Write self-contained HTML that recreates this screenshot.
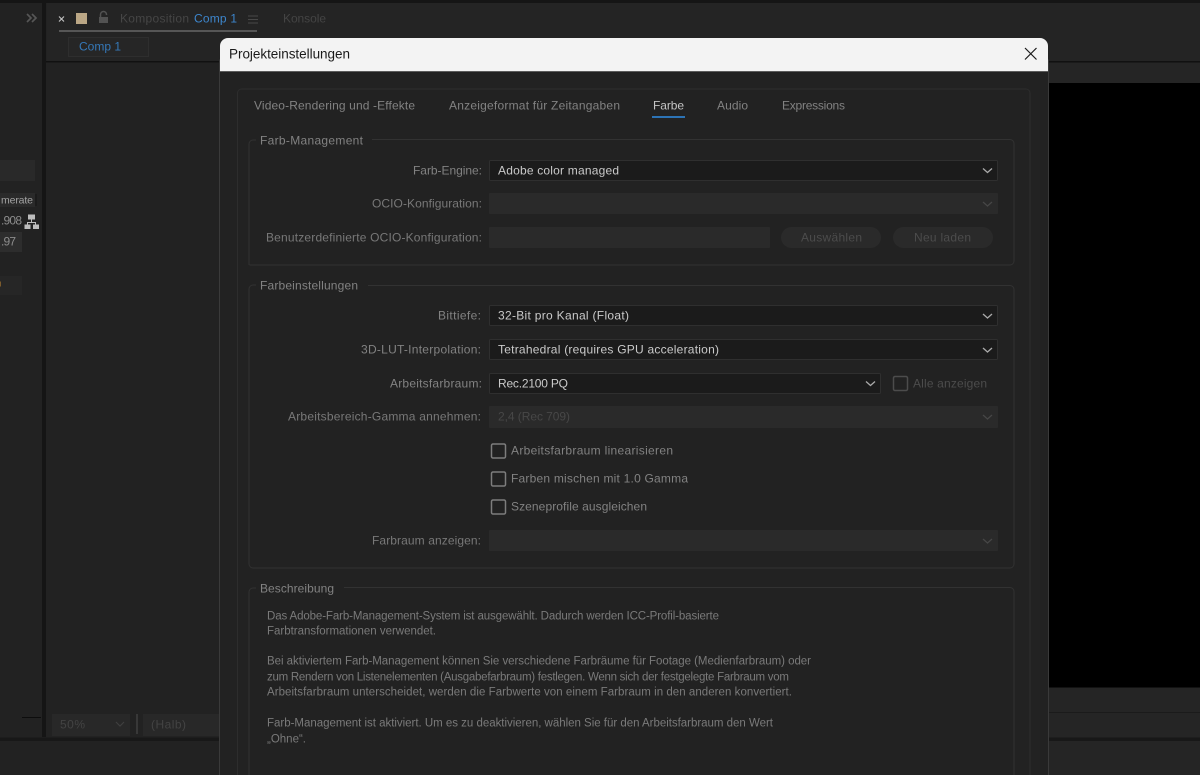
<!DOCTYPE html>
<html lang="de"><head><meta charset="utf-8"><title>Projekteinstellungen</title>
<style>
html,body{margin:0;padding:0;background:#222;width:1200px;height:775px;overflow:hidden}
svg{display:block;filter:blur(.3px)}
text{font-family:"Liberation Sans",sans-serif;font-size:12px;fill:#8f8f8f;transform:translateY(-.5px)}
.l{fill:#787878}.d{fill:#464646}.w{fill:#cacaca}.h{fill:#828282}
.p{fill:#7a7a7a;font-size:11.5px}
</style></head><body>
<svg width="1200" height="775" viewBox="0 0 1200 775" xmlns="http://www.w3.org/2000/svg">
<rect width="1200" height="775" fill="#222222"/>
<!-- background app -->
<rect x="1048" y="63" width="152" height="712" fill="#252525"/>
<rect x="47" y="0" width="1153" height="61" fill="#242424"/>
<rect y="0" width="1200" height="3" fill="#151515"/>
<rect x="42" y="3" width="4" height="734" fill="#151515"/>
<rect x="46" y="61" width="1154" height="1.500" fill="#111111"/>
<rect x="0" y="737.500" width="1200" height="3.500" fill="#181818"/>
<rect x="1048" y="83" width="152" height="604.500" fill="#000000"/>
<rect x="1048" y="712" width="152" height="1" fill="#1b1b1b"/>
<rect x="0" y="160" width="35" height="21" fill="#292929"/>
<rect x="0" y="193" width="35" height="14" fill="#2a2a2a"/>
<rect x="35.500" y="194" width="1" height="12" fill="#141414"/>
<rect x="0" y="232" width="22" height="20" fill="#2d2d2d"/>
<rect x="0" y="276" width="22" height="19" fill="#262626"/>
<path d="M27 14l4 4-4 4M32 14l4 4-4 4" fill="none" stroke="#565656" stroke-width="1.700"/>
<path d="M59 16.500l5 5M64 16.500l-5 5" stroke="#c4c4c4" stroke-width="1.100"/>
<rect x="76" y="13" width="11" height="11" fill="#bba786"/>
<path d="M100.500 17v-2.500a3 3 0 0 1 6 0v.5" fill="none" stroke="#525252" stroke-width="1.500"/>
<rect x="99" y="17" width="9" height="6" fill="#525252"/>
<text x="120" y="23" class="d" textLength="69">Komposition</text>
<text x="194" y="23" style="fill:#3d86cd" textLength="43">Comp 1</text>
<path d="M248 16h10M248 19.500h10M248 23h10" stroke="#484848" stroke-width="1"/>
<text x="283" y="23" style="fill:#444" textLength="43">Konsole</text>
<rect x="59" y="30" width="198" height="2" fill="#565656"/>
<rect x="68.500" y="37.500" width="80" height="19" fill="#262626" stroke="#2e2e2e"/>
<text x="79" y="51" style="fill:#3578b8" textLength="42">Comp 1</text>
<text x="1" y="204" style="fill:#a3a3a3;font-size:10.500px" textLength="32">merate</text>
<text x="1" y="225" style="fill:#8c8c8c" textLength="21">.908</text>
<text x="1" y="246" style="fill:#8c8c8c" textLength="15">.97</text>
<path d="M0 284h1" stroke="#7a5a2c" stroke-width="5"/>
<path d="M28 214.500h7v5h-7zM24.500 224.500h6v4.500h-6zM33 224.500h6v4.500h-6z" fill="#bdbdbd"/>
<path d="M31.500 219.500v3M27.500 225v-2.500h8v2.500" fill="none" stroke="#bdbdbd"/>
<rect x="22" y="717" width="19" height="1" fill="#0d0d0d"/>
<rect x="52" y="714" width="78" height="22" fill="#282828"/>
<text x="60" y="729" style="fill:#434343" textLength="25">50%</text>
<path d="M116 722l4 4 4-4" fill="none" stroke="#3f3f3f" stroke-width="1.200"/>
<rect x="136" y="714" width="2" height="20" fill="#383838"/>
<rect x="143" y="714" width="77" height="22" fill="#282828"/>
<text x="151" y="729" style="fill:#434343" textLength="35">(Halb)</text>

<!-- dialog -->
<rect x="219.500" y="60" width="829" height="716" fill="#222222" stroke="#3a3a3a"/>
<path d="M220 71.500V46a8 8 0 0 1 8-8H1040a8 8 0 0 1 8 8V71.500z" fill="#f3f3f3"/>
<rect x="220" y="71" width="828" height="1" fill="#5c5c5c"/>
<text x="229" y="59" style="fill:#1a1a1a;font-size:13.500px" textLength="121">Projekteinstellungen</text>
<path d="M1025 48l11.500 11.500M1036.500 48L1025 59.500" stroke="#1a1a1a" stroke-width="1.200"/>

<!-- outer frame -->
<path d="M237.500 775V93a4 4 0 0 1 4-4H1026a4 4 0 0 1 4 4V775" fill="none" stroke="#2d2d2d"/>
<text x="254" y="110" class="h" textLength="161">Video-Rendering und -Effekte</text>
<text x="449" y="110" class="h" textLength="171">Anzeigeformat für Zeitangaben</text>
<text x="653" y="110" style="fill:#c4c4c4" textLength="31">Farbe</text>
<text x="717" y="110" class="h" textLength="31">Audio</text>
<text x="782" y="110" class="h" textLength="63">Expressions</text>
<rect x="652" y="116" width="33" height="2" fill="#2c73b5"/>

<!-- Farb-Management -->
<path d="M249 265V144a4 4 0 0 1 4-4h3M372 139.500H1010a4 4 0 0 1 4 4V261a4 4 0 0 1-4 4H249.500" fill="none" stroke="#323232"/>
<text x="260" y="145" class="h" textLength="103">Farb-Management</text>
<text x="413" y="175" class="h" textLength="69">Farb-Engine:</text>
<rect x="489.500" y="160.500" width="508" height="20" rx="1" fill="#1b1b1b" stroke="#2f2f2f"/>
<text x="498" y="175" class="w" textLength="121">Adobe color managed</text>
<path d="M983 168.500l4.500 4 4.500-4" fill="none" stroke="#aaa" stroke-width="1.300"/>
<text x="372" y="208" class="l" textLength="110">OCIO-Konfiguration:</text>
<rect x="489" y="193" width="509" height="21" rx="1" fill="#2a2a2a"/>
<path d="M983 202l4.500 4 4.500-4" fill="none" stroke="#464646" stroke-width="1.300"/>
<text x="266" y="242" class="l" textLength="216">Benutzerdefinierte OCIO-Konfiguration:</text>
<rect x="489" y="227" width="281" height="21" rx="1" fill="#2a2a2a"/>
<rect x="781" y="227" width="100" height="21" rx="10.500" fill="#2a2a2a"/>
<text x="801" y="242" style="fill:#4c4c4c" textLength="61">Auswählen</text>
<rect x="893" y="227" width="100" height="21" rx="10.500" fill="#2a2a2a"/>
<text x="914" y="242" style="fill:#4c4c4c" textLength="57">Neu laden</text>

<!-- Farbeinstellungen -->
<path d="M249 564V289a4 4 0 0 1 4-4h3M368 285.500H1010a4 4 0 0 1 4 4V564a4 4 0 0 1-4 4H253a4 4 0 0 1-4-4" fill="none" stroke="#323232"/>
<text x="260" y="290" class="h" textLength="98">Farbeinstellungen</text>
<text x="438" y="320" class="h" textLength="43">Bittiefe:</text>
<rect x="489.500" y="305.500" width="508" height="20" rx="1" fill="#1b1b1b" stroke="#2f2f2f"/>
<text x="498" y="320" class="w" textLength="131">32-Bit pro Kanal (Float)</text>
<path d="M983 314l4.500 4 4.500-4" fill="none" stroke="#aaa" stroke-width="1.300"/>
<text x="361" y="354" class="h" textLength="120">3D-LUT-Interpolation:</text>
<rect x="489.500" y="339.500" width="508" height="20" rx="1" fill="#1b1b1b" stroke="#2f2f2f"/>
<text x="498" y="354" class="w" textLength="221">Tetrahedral (requires GPU acceleration)</text>
<path d="M983 348l4.500 4 4.500-4" fill="none" stroke="#aaa" stroke-width="1.300"/>
<text x="390" y="388" class="h" textLength="92">Arbeitsfarbraum:</text>
<rect x="489.500" y="373.500" width="391" height="20" rx="1" fill="#1b1b1b" stroke="#2f2f2f"/>
<text x="498" y="388" class="w" textLength="70">Rec.2100 PQ</text>
<path d="M866 381.500l4.500 4 4.500-4" fill="none" stroke="#aaa" stroke-width="1.300"/>
<rect x="893.500" y="376.500" width="14" height="14" rx="1.500" fill="none" stroke="#4c4c4c" stroke-width="1.500"/>
<text x="913" y="388" style="fill:#4c4c4c" textLength="74">Alle anzeigen</text>
<text x="288" y="421" class="l" textLength="193">Arbeitsbereich-Gamma annehmen:</text>
<rect x="489" y="406" width="509" height="22" rx="1" fill="#2a2a2a"/>
<text x="498" y="421" style="fill:#474747" textLength="72">2,4 (Rec 709)</text>
<path d="M983 415l4.500 4 4.500-4" fill="none" stroke="#464646" stroke-width="1.300"/>
<rect x="491.500" y="444" width="14" height="14" rx="1.500" fill="none" stroke="#7d7d7d" stroke-width="1.500"/>
<text x="511" y="455" class="h" textLength="162">Arbeitsfarbraum linearisieren</text>
<rect x="491.500" y="472" width="14" height="14" rx="1.500" fill="none" stroke="#7d7d7d" stroke-width="1.500"/>
<text x="511" y="483" class="h" textLength="177">Farben mischen mit 1.0 Gamma</text>
<rect x="491.500" y="500" width="14" height="14" rx="1.500" fill="none" stroke="#7d7d7d" stroke-width="1.500"/>
<text x="511" y="511" class="h" textLength="136">Szeneprofile ausgleichen</text>
<text x="372" y="545" class="l" textLength="109">Farbraum anzeigen:</text>
<rect x="489" y="530" width="509" height="21" rx="1" fill="#2a2a2a"/>
<path d="M983 539l4.500 4 4.500-4" fill="none" stroke="#464646" stroke-width="1.300"/>

<!-- Beschreibung -->
<path d="M249 775V592a4 4 0 0 1 4-4h3M344 587.500H1010a4 4 0 0 1 4 4V775" fill="none" stroke="#323232"/>
<text x="260" y="593" class="h" textLength="74">Beschreibung</text>
<text x="267" y="620" class="p" textLength="452">Das Adobe-Farb-Management-System ist ausgewählt. Dadurch werden ICC-Profil-basierte</text>
<text x="267" y="635" class="p" textLength="169">Farbtransformationen verwendet.</text>
<text x="267" y="665" class="p" textLength="544">Bei aktiviertem Farb-Management können Sie verschiedene Farbräume für Footage (Medienfarbraum) oder</text>
<text x="267" y="681" class="p" textLength="522">zum Rendern von Listenelementen (Ausgabefarbraum) festlegen. Wenn sich der festgelegte Farbraum vom</text>
<text x="267" y="696" class="p" textLength="525">Arbeitsfarbraum unterscheidet, werden die Farbwerte von einem Farbraum in den anderen konvertiert.</text>
<text x="267" y="727" class="p" textLength="506">Farb-Management ist aktiviert. Um es zu deaktivieren, wählen Sie für den Arbeitsfarbraum den Wert</text>
<text x="267" y="743" class="p" textLength="39">„Ohne“.</text>
</svg>
</body></html>
